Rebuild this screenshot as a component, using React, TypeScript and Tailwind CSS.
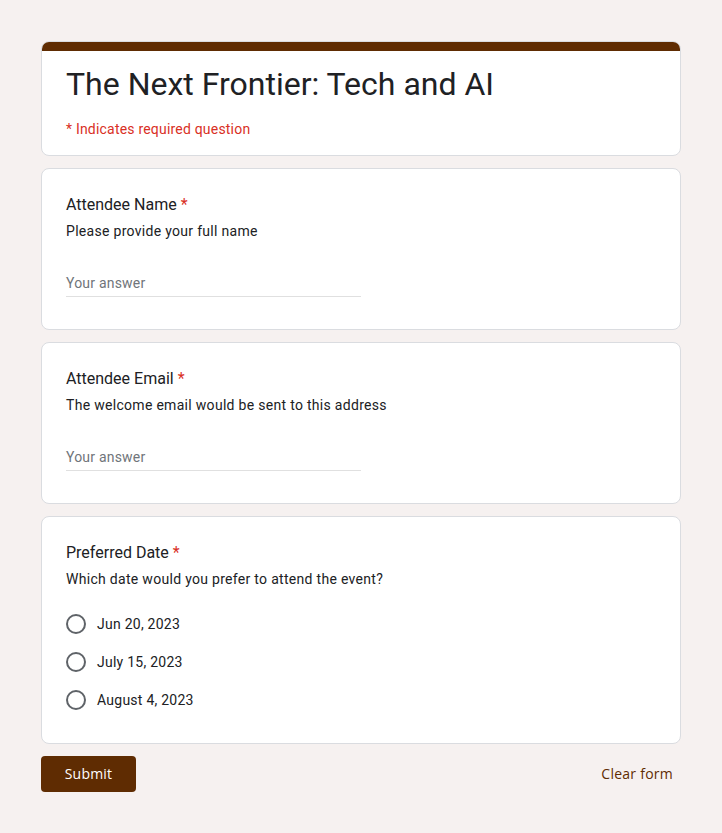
// Event registration form (Google Forms style)

const ROBOTO = { fontFamily: "Roboto, 'Noto Sans', sans-serif" };
const BUTTON_FONT = { fontFamily: "'Open Sans', sans-serif" };

function RequiredMark() {
  return <span className="ml-1 text-[#d93025]">*</span>;
}

function TextQuestion({ title, description }: { title: string; description: string }) {
  return (
    <div className="rounded-lg border border-[#dadce0] bg-white px-6 pt-6 pb-[24px]">
      <div className="text-base leading-6 text-[#202124]">
        {title}
        <RequiredMark />
      </div>
      <div className="mt-[4px] text-sm leading-5 tracking-[0.3px] text-[#202124]">{description}</div>
      <div className="mt-[32px] w-[295px] border-b border-[#e0e0e0] pb-[3px] text-sm leading-5 tracking-[0.2px] text-[#70757a]">
        Your answer
      </div>
      <div className="h-[8px]" />
    </div>
  );
}

const DATES = ["Jun 20, 2023", "July 15, 2023", "August 4, 2023"];

export default function App() {
  return (
    <div className="min-h-[833px] bg-[#f6f1f0] pt-[41px] pb-10" style={ROBOTO}>
      <div className="mx-auto flex w-[640px] flex-col gap-3">
        {/* Header */}
        <div className="overflow-hidden rounded-lg border border-[#dadce0] bg-white">
          <div className="-mx-px -mt-px h-[10px] bg-[#5f2c02]" />
          <div className="px-6 pt-[13px] pb-[16px]">
            <h1 className="text-[32px] leading-10 text-[#202124]">The Next Frontier: Tech and AI</h1>
            <div className="mt-[15px] text-sm leading-5 tracking-[0.2px] text-[#d93025]">
              * Indicates required question
            </div>
          </div>
        </div>

        <TextQuestion title="Attendee Name" description="Please provide your full name" />
        <TextQuestion
          title="Attendee Email"
          description="The welcome email would be sent to this address"
        />

        {/* Date choice */}
        <div className="rounded-lg border border-[#dadce0] bg-white px-6 pt-6 pb-[24px]">
          <div className="text-base leading-6 text-[#202124]">
            Preferred Date
            <RequiredMark />
          </div>
          <div className="mt-[4px] text-sm leading-5 tracking-[0.3px] text-[#202124]">
            Which date would you prefer to attend the event?
          </div>
          <div className="mt-[16px] flex flex-col">
            {DATES.map((d) => (
              <label key={d} className="flex h-[38px] items-center gap-[11px]">
                <span className="h-5 w-5 rounded-full border-2 border-[#5f6368]" />
                <span className="text-sm tracking-[0.25px] text-[#202124]">{d}</span>
              </label>
            ))}
          </div>
        </div>

        {/* Actions */}
        <div className="flex items-center justify-between">
          <button
            className="h-9 w-[95px] rounded bg-[#5f2c02] text-sm font-medium tracking-[0.2px] text-white"
            style={BUTTON_FONT}
          >
            Submit
          </button>
          <button
            className="mr-2 h-9 px-0 text-sm font-medium tracking-[0.25px] text-[#5f2c02]"
            style={BUTTON_FONT}
          >
            Clear form
          </button>
        </div>
      </div>
    </div>
  );
}
